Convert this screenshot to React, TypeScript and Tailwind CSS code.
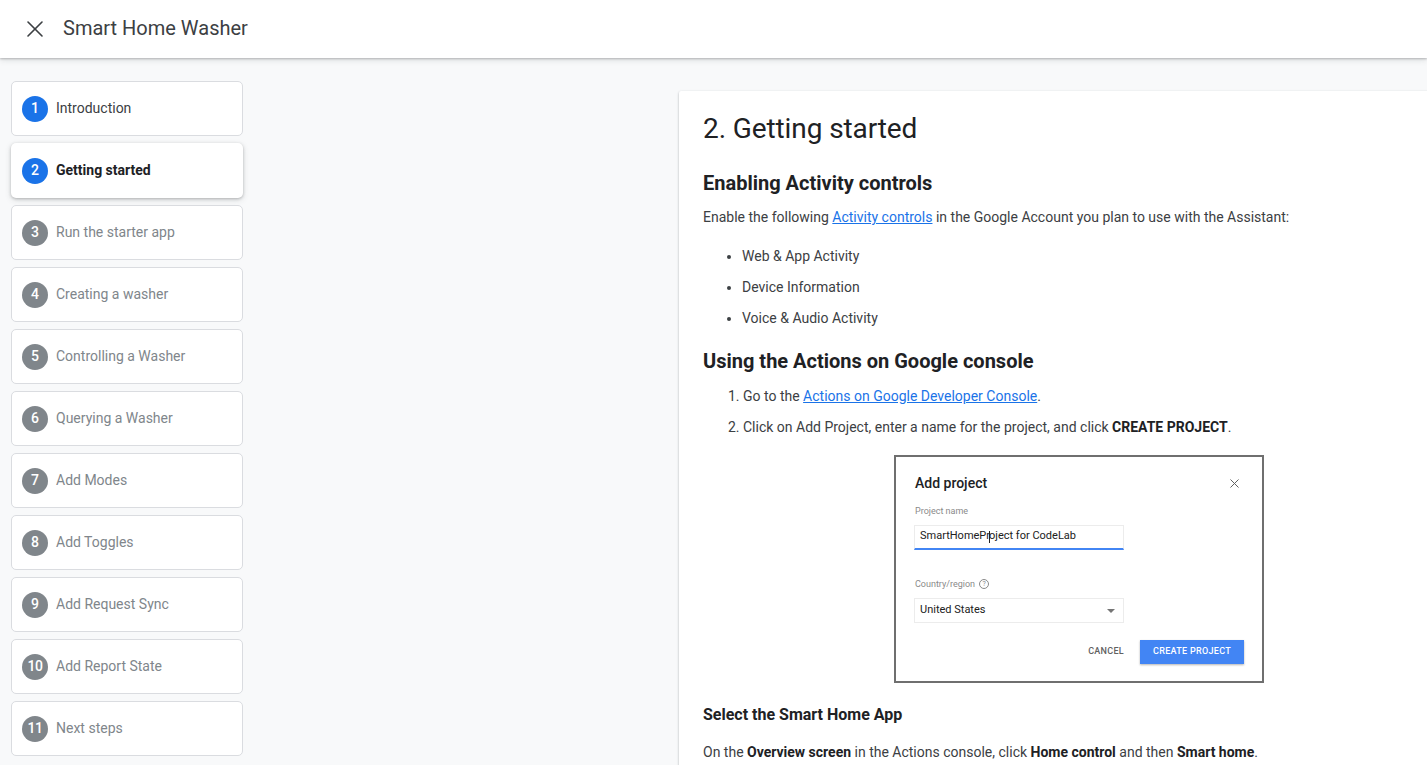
import { X } from "lucide-react";

const steps = [
  "Introduction",
  "Getting started",
  "Run the starter app",
  "Creating a washer",
  "Controlling a Washer",
  "Querying a Washer",
  "Add Modes",
  "Add Toggles",
  "Add Request Sync",
  "Add Report State",
  "Next steps",
];

const current = 2;

function StepCard({ n, label }: { n: number; label: string }) {
  const active = n === current;
  const done = n < current;
  return (
    <div
      className={`flex items-center h-[55px] rounded-[5px] bg-white ${
        active
          ? "pl-[11px] shadow-[0_1px_3px_rgba(60,64,67,0.3),0_2px_6px_rgba(60,64,67,0.15)]"
          : "border border-[#dadce0] pl-[10px]"
      }`}
    >
      <span
        className={`flex items-center justify-center w-[26px] h-[26px] rounded-full text-white text-[14px] font-medium shrink-0 ${
          n <= current ? "bg-[#1a73e8]" : "bg-[#80868b]"
        } ${n >= 10 ? "tracking-[-0.5px]" : ""}`}
      >
        {n}
      </span>
      <span
        className={`ml-[8px] text-[14px] ${
          active ? "font-bold text-[#202124]" : done ? "text-[#3c4043]" : "text-[#80868b]"
        }`}
      >
        {label}
      </span>
    </div>
  );
}

function DialogShot() {
  return (
    <div className="mx-auto w-[370px] h-[228px] border-2 border-[#6f6f6f] bg-white relative font-['Roboto',sans-serif]">
      <div className="flex items-center justify-between pl-[19px] pr-[20px] pt-[16px]">
        <span className="text-[14px] font-medium text-[#202124]">Add project</span>
        <X className="w-[15px] h-[15px] text-[#616161]" strokeWidth={1.6} />
      </div>
      <div className="pl-[18px] mt-[11px]">
        <div className="text-[9px] text-[#8a8a8a] pl-px">Project name</div>
        <div className="mt-[6px] w-[210px] h-[25px] bg-white border border-[#ececec] border-b-2 border-b-[#4285f4] flex items-center pl-[5px] text-[11px] text-[#212121]">
          SmartHomePr<span className="inline-block w-px h-[12px] bg-[#212121] mx-[-1px]" />oject for CodeLab
        </div>
        <div className="mt-[28px] flex items-center gap-[4px] text-[9px] text-[#8a8a8a] pl-px">
          Country/region
          <span className="inline-flex items-center justify-center w-[10px] h-[10px] rounded-full border border-[#8a8a8a] text-[7px] leading-none">
            ?
          </span>
        </div>
        <div className="mt-[7px] w-[210px] h-[25px] bg-white border border-[#ececec] flex items-center justify-between pl-[5px] pr-[8px] text-[11px] text-[#212121]">
          United States
          <span className="w-0 h-0 border-l-[4px] border-r-[4px] border-t-[4px] border-l-transparent border-r-transparent border-t-[#757575]" />
        </div>
      </div>
      <div className="flex items-center justify-end gap-[16px] pr-[18px] mt-[17px]">
        <span className="text-[9px] font-medium text-[#616161] tracking-[0.3px]">CANCEL</span>
        <span className="h-[24px] w-[104px] flex items-center justify-center bg-[#4285f4] text-white text-[9px] font-medium tracking-[0.3px] shadow-[0_1px_2px_rgba(0,0,0,0.3)]">
          CREATE PROJECT
        </span>
      </div>
    </div>
  );
}

export default function App() {
  return (
    <div className="min-h-screen h-[765px] overflow-hidden bg-[#f8f9fa] font-['Roboto',sans-serif]">
      <header className="h-[58px] bg-white flex items-center shadow-[0_1px_2px_rgba(60,64,67,0.3),0_2px_6px_rgba(60,64,67,0.15)] relative z-10">
        <X className="ml-[21px] w-[28px] h-[28px] text-[#3c4043]" strokeWidth={1.4} />
        <span className="ml-[14px] -mt-[2px] text-[20px] text-[#3c4043]">Smart Home Washer</span>
      </header>

      <div className="flex items-start">
        <nav className="ml-[11px] mt-[23px] w-[232px] shrink-0 flex flex-col gap-[7px]">
          {steps.map((s, i) => (
            <StepCard key={s} n={i + 1} label={s} />
          ))}
        </nav>

        <main className="ml-[436px] mt-[33px] w-[800px] shrink-0 bg-white rounded-tl-[2px] shadow-[0_1px_2px_rgba(60,64,67,0.3),0_1px_3px_rgba(60,64,67,0.15)] px-[24px] pt-[20px] pb-[40px] text-[#3c4043]">
          <h1 className="text-[28px] leading-[36px] text-[#202124] tracking-[-0.1px]">2. Getting started</h1>

          <h2 className="mt-[22px] text-[20px] leading-[28px] font-bold text-[#202124]">
            Enabling Activity controls
          </h2>
          <p className="mt-[10px] text-[14px] leading-[20px]">
            Enable the following{" "}
            <a className="text-[#1a73e8] underline">Activity controls</a> in the Google Account you
            plan to use with the Assistant:
          </p>
          <ul className="mt-[19px] pl-[39px] list-disc text-[14px] leading-[20px] flex flex-col gap-[11px]">
            <li>Web &amp; App Activity</li>
            <li>Device Information</li>
            <li>Voice &amp; Audio Activity</li>
          </ul>

          <h2 className="mt-[19px] text-[20px] leading-[28px] font-bold text-[#202124]">
            Using the Actions on Google console
          </h2>
          <ol className="mt-[11px] pl-[40px] list-decimal text-[14px] leading-[20px] flex flex-col gap-[11px]">
            <li>
              Go to the{" "}
              <a className="text-[#1a73e8] underline">Actions on Google Developer Console</a>.
            </li>
            <li>
              Click on Add Project, enter a name for the project, and click{" "}
              <b className="text-[#202124]">CREATE PROJECT</b>.
            </li>
          </ol>

          <div className="mt-[18px]">
            <DialogShot />
          </div>

          <h3 className="mt-[20px] text-[16px] leading-[24px] font-bold text-[#202124]">
            Select the Smart Home App
          </h3>
          <p className="mt-[15px] text-[14px] leading-[20px]">
            On the <b className="text-[#202124]">Overview screen</b> in the Actions console, click{" "}
            <b className="text-[#202124]">Home control</b> and then{" "}
            <b className="text-[#202124]">Smart home</b>.
          </p>
        </main>
      </div>
    </div>
  );
}
